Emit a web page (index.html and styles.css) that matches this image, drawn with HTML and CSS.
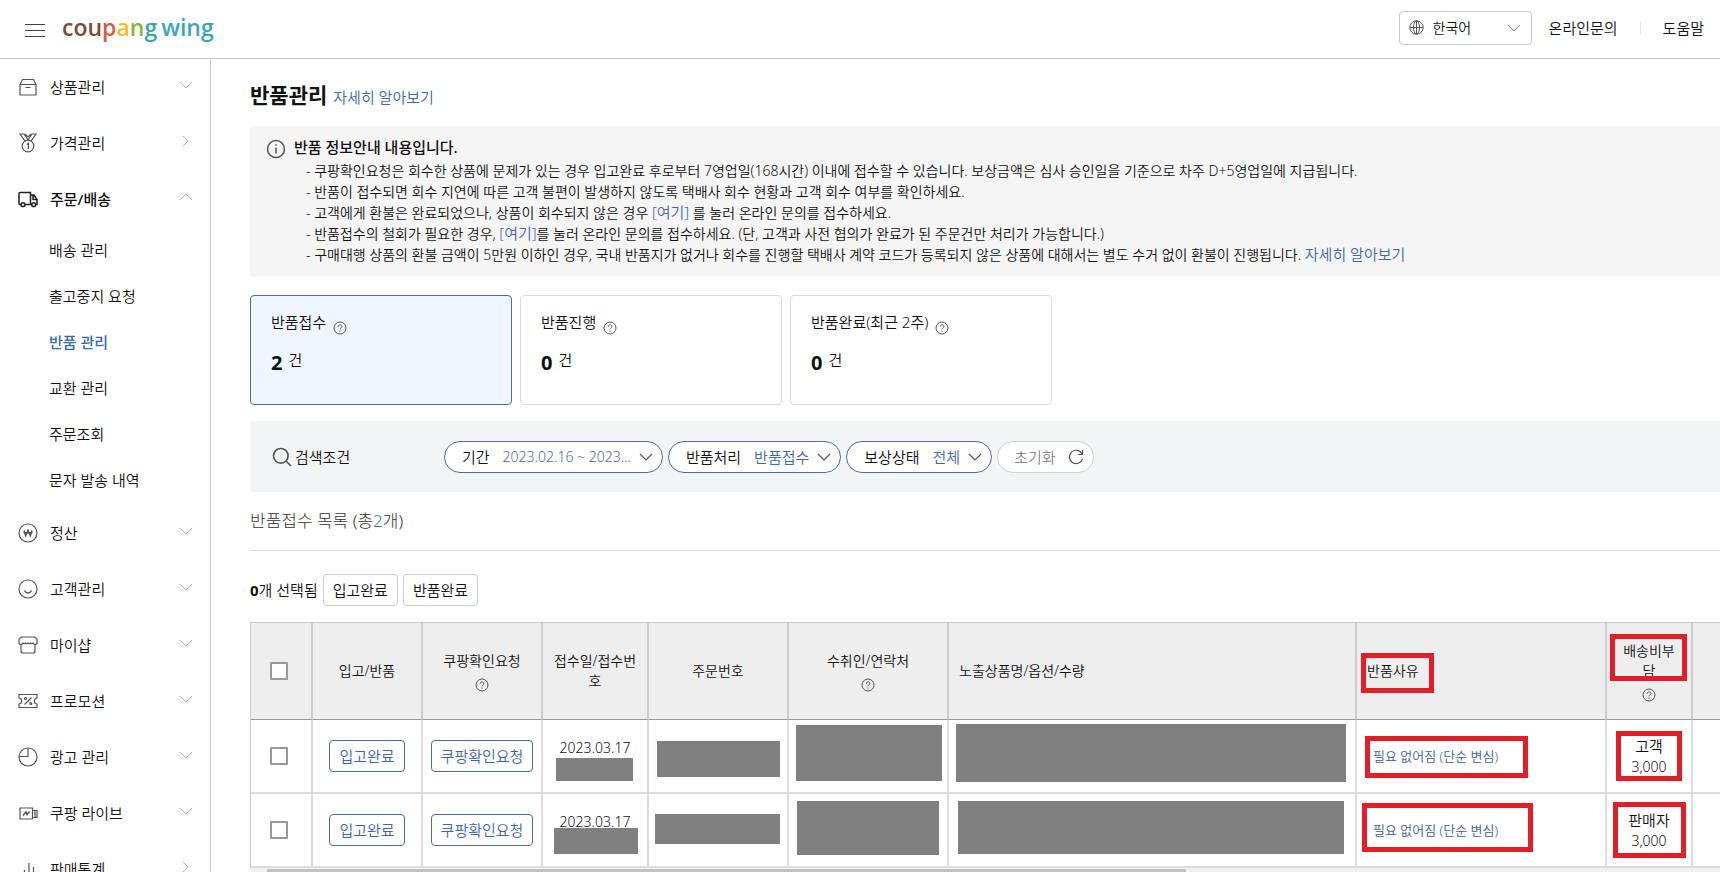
FILE: index.html
```html
<!DOCTYPE html>
<html lang="ko">
<head>
<meta charset="utf-8">
<title>반품관리 - coupang wing</title>
<link rel="stylesheet" href="styles.css">
</head>
<body>
<svg class="sprite" aria-hidden="true">
  <symbol id="down" viewBox="0 0 14 8"><path d="M1 1l6 6 6-6"/></symbol>
  <symbol id="up" viewBox="0 0 14 8"><path d="M1 7l6-6 6 6"/></symbol>
  <symbol id="right" viewBox="0 0 8 14"><path d="M1 2l5 5-5 5"/></symbol>
  <symbol id="help" viewBox="0 0 14 14"><circle cx="7" cy="7" r="6"/><path d="M5.200 5.800c0-2.600 3.700-2.500 3.700-.3 0 1.400-1.900 1.400-1.900 2.800M7 9.500v1.200"/></symbol>
</svg>

<header class="topbar">
  <button class="menu-toggle" type="button" aria-label="메뉴">
    <svg width="20" height="14" viewBox="0 0 20 14"><path d="M0 .5h20M0 6.500h20M0 12.500h20"/></svg>
  </button>
  <a class="logo" href="#"><span><span class="brown">cou</span><span class="red">p</span><span class="yellow">a</span><span class="green">n</span><span class="teal">g</span></span><span class="sky">wing</span></a>
  <div class="tools">
    <label class="lang">
      <svg width="15" height="15" viewBox="0 0 15 15"><circle cx="7.500" cy="7.500" r="6.700"/><ellipse cx="7.500" cy="7.500" rx="3" ry="6.700"/><path d="M7.500 1v13M1 7.500h13"/></svg>
      <select aria-label="언어"><option>한국어</option></select>
      <svg class="lang-arrow" width="14" height="8"><use href="#down"/></svg>
    </label>
    <a class="tool" href="#">온라인문의</a>
    <span class="divider"></span>
    <a class="tool" href="#">도움말</a>
  </div>
</header>

<div class="layout">
  <nav class="sidebar">
    <a class="item" href="#"><svg class="ico" viewBox="0 0 20 20"><path d="M2 7.500V18h16V7.500zM2 7.500L4.500 2.500h11L18 7.500M7.500 10.500h5"/></svg><span>상품관리</span><svg class="arrow"><use href="#down"/></svg></a>
    <a class="item" href="#"><svg class="ico" viewBox="0 0 20 20"><circle cx="10" cy="13" r="5.800"/><path d="M7 8L2 1h4l4 6 4-6h4l-5 7M7 1l3 3 3-3M8.800 11.500l1.600-1.200V16"/></svg><span>가격관리</span><svg class="arrow"><use href="#right"/></svg></a>
    <a class="item current" href="#"><svg class="ico" viewBox="0 0 20 20"><path d="M3 15.500H1.800Q1 15.500 1 14.500v-10Q1 3.500 2 3.500h10.500v12H7M12.500 6h3.500l3 4.500v5h-1.500M13.800 15.500h-1M15 6v4.500h4"/><circle cx="5" cy="15.700" r="1.900"/><circle cx="15.700" cy="15.700" r="1.900"/></svg><span>주문/배송</span><svg class="arrow"><use href="#up"/></svg></a>
    <div class="submenu">
      <a href="#">배송 관리</a>
      <a href="#">출고중지 요청</a>
      <a class="selected" href="#">반품 관리</a>
      <a href="#">교환 관리</a>
      <a href="#">주문조회</a>
      <a href="#">문자 발송 내역</a>
    </div>
    <a class="item" href="#"><svg class="ico" viewBox="0 0 20 20"><circle cx="10" cy="10" r="9"/><path class="heavy" d="M6 7.500l1.700 5L10 7.500l2.300 5L14 7.500M5.500 9.800h9"/></svg><span>정산</span><svg class="arrow"><use href="#down"/></svg></a>
    <a class="item" href="#"><svg class="ico" viewBox="0 0 20 20"><circle cx="10" cy="10" r="9"/><path d="M6.500 11.500c1 3.200 6 3.200 7 0"/></svg><span>고객관리</span><svg class="arrow"><use href="#down"/></svg></a>
    <a class="item" href="#"><svg class="ico" viewBox="0 0 20 20"><path d="M3.500 2h13L19 4v3.500q0 2-2 2-1.500 0-2-1.500-1 1.500-2.500 0-1 1.500-2.500 0-1 1.500-2.500 0-1 1.500-2.500 0-.5 1.500-2 1.500-2 0-2-2V4zM3 10v6q0 2 2 2h10q2 0 2-2v-6"/></svg><span>마이샵</span><svg class="arrow"><use href="#down"/></svg></a>
    <a class="item" href="#"><svg class="ico" viewBox="0 0 20 20"><path d="M1 3.500h18V7c-3.500.5-3.500 5.500 0 6v3.500H1V13c3.500-.5 3.500-5.500 0-6zM6.500 13.500l7-7"/><circle cx="7.500" cy="7.500" r="1"/><circle cx="12.800" cy="12.500" r="1"/></svg><span>프로모션</span><svg class="arrow"><use href="#down"/></svg></a>
    <a class="item" href="#"><svg class="ico" viewBox="0 0 20 20"><circle cx="10" cy="10" r="9"/><path d="M10 1v8.500H1.200"/></svg><span>광고 관리</span><svg class="arrow"><use href="#down"/></svg></a>
    <a class="item" href="#"><svg class="ico" viewBox="0 0 20 20"><path d="M2 5h12.500v11H2zM14.500 7.500H19v7h-4.500M17 7.500v7"/><path class="heavy" d="M5 12.500l3-3.500 1 2.500 2.500-3"/></svg><span>쿠팡 라이브</span><svg class="arrow"><use href="#down"/></svg></a>
    <a class="item" href="#"><svg class="ico" viewBox="0 0 20 20"><path d="M11 4v14M6.500 11v7M15.500 8v10"/></svg><span>판매통계</span><svg class="arrow"><use href="#right"/></svg></a>
  </nav>

  <main class="content">
    <div class="page-title"><h1>반품관리</h1><a href="#">자세히 알아보기</a></div>

    <section class="notice">
      <svg class="info" width="20" height="20" viewBox="0 0 20 20"><circle cx="10" cy="10" r="8.500"/><path d="M10 8.500v6M10 5.200v1.600"/></svg>
      <div>
        <h2>반품 정보안내 내용입니다.</h2>
        <ul>
          <li>- 쿠팡확인요청은 회수한 상품에 문제가 있는 경우 입고완료 후로부터 7영업일(168시간) 이내에 접수할 수 있습니다. 보상금액은 심사 승인일을 기준으로 차주 D+5영업일에 지급됩니다.</li>
          <li>- 반품이 접수되면 회수 지연에 따른 고객 불편이 발생하지 않도록 택배사 회수 현황과 고객 회수 여부를 확인하세요.</li>
          <li>- 고객에게 환불은 완료되었으나, 상품이 회수되지 않은 경우 <a href="#">[여기]</a> 를 눌러 온라인 문의를 접수하세요.</li>
          <li>- 반품접수의 철회가 필요한 경우, <a href="#">[여기]</a>를 눌러 온라인 문의를 접수하세요. (단, 고객과 사전 협의가 완료가 된 주문건만 처리가 가능합니다.)</li>
          <li>- 구매대행 상품의 환불 금액이 5만원 이하인 경우, 국내 반품지가 없거나 회수를 진행할 택배사 계약 코드가 등록되지 않은 상품에 대해서는 별도 수거 없이 환불이 진행됩니다. <a href="#">자세히 알아보기</a></li>
        </ul>
      </div>
    </section>

    <section class="cards">
      <button class="card active" type="button">
        <span class="card-label">반품접수 <svg class="help"><use href="#help"/></svg></span>
        <span class="card-count"><b>2</b><span>건</span></span>
      </button>
      <button class="card" type="button">
        <span class="card-label">반품진행 <svg class="help"><use href="#help"/></svg></span>
        <span class="card-count"><b>0</b><span>건</span></span>
      </button>
      <button class="card" type="button">
        <span class="card-label">반품완료(최근 2주) <svg class="help"><use href="#help"/></svg></span>
        <span class="card-count"><b>0</b><span>건</span></span>
      </button>
    </section>

    <section class="filters">
      <div class="filters-label"><svg width="20" height="20" viewBox="0 0 20 20"><circle cx="8.800" cy="8.800" r="7.300"/><path d="M14 14l5 5"/></svg>검색조건</div>
      <div class="pills">
        <button class="pill" type="button">기간<span class="value date">2023.02.16 ~ 2023...</span><svg class="pill-arrow"><use href="#down"/></svg></button>
        <button class="pill" type="button">반품처리<span class="value">반품접수</span><svg class="pill-arrow"><use href="#down"/></svg></button>
        <button class="pill" type="button">보상상태<span class="value">전체</span><svg class="pill-arrow"><use href="#down"/></svg></button>
        <button class="pill reset" type="button">초기화<svg width="16" height="16" viewBox="0 0 16 16"><path d="M14.200 5.200A6.700 6.700 0 1 0 14.500 10M14.600 1v4.500h-4.500"/></svg></button>
      </div>
    </section>

    <h2 class="list-title">반품접수 목록 (총<span>2</span>개)</h2>

    <div class="bulk">
      <span class="picked"><b>0</b>개 선택됨</span>
      <button class="btn" type="button">입고완료</button>
      <button class="btn" type="button">반품완료</button>
    </div>

    <div class="table-wrap">
      <table>
        <colgroup><col class="w-check"><col class="w-in"><col class="w-req"><col class="w-date"><col class="w-order"><col class="w-person"><col class="w-item"><col class="w-reason"><col class="w-fee"><col class="w-rest"></colgroup>
        <thead>
          <tr>
            <th class="pick"><input type="checkbox" aria-label="전체 선택"></th>
            <th>입고/반품</th>
            <th>쿠팡확인요청<svg class="help"><use href="#help"/></svg></th>
            <th>접수일/접수번호</th>
            <th>주문번호</th>
            <th>수취인/연락처<svg class="help"><use href="#help"/></svg></th>
            <th class="left">노출상품명/옵션/수량</th>
            <th class="left">반품사유<i class="mark mark-reason-head"></i></th>
            <th>배송비부<br>담<svg class="help"><use href="#help"/></svg><i class="mark mark-fee-head"></i></th>
            <th></th>
          </tr>
        </thead>
        <tbody>
          <tr>
            <td class="pick"><input type="checkbox" aria-label="첫 번째 반품 선택"></td>
            <td><button class="btn blue" type="button">입고완료</button></td>
            <td><button class="btn blue" type="button">쿠팡확인요청</button></td>
            <td class="date-cell">2023.03.17<i class="mask mask-date-1"></i></td>
            <td><i class="mask mask-order-1"></i></td>
            <td><i class="mask mask-person-1"></i></td>
            <td><i class="mask mask-item-1"></i></td>
            <td class="reason"><a href="#">필요 없어짐 (단순 변심)</a><i class="mark mark-reason-1"></i></td>
            <td class="fee"><span>고객</span><br>3,000<i class="mark mark-fee-1"></i></td>
            <td></td>
          </tr>
          <tr>
            <td class="pick"><input type="checkbox" aria-label="두 번째 반품 선택"></td>
            <td><button class="btn blue" type="button">입고완료</button></td>
            <td><button class="btn blue" type="button">쿠팡확인요청</button></td>
            <td class="date-cell">2023.03.17<i class="mask mask-date-2"></i></td>
            <td><i class="mask mask-order-2"></i></td>
            <td><i class="mask mask-person-2"></i></td>
            <td><i class="mask mask-item-2"></i></td>
            <td class="reason"><a href="#">필요 없어짐 (단순 변심)</a><i class="mark mark-reason-2"></i></td>
            <td class="fee"><span>판매자</span><br>3,000<i class="mark mark-fee-2"></i></td>
            <td></td>
          </tr>
        </tbody>
      </table>
      <div class="scrollbar"><div class="thumb"></div></div>
    </div>
  </main>
</div>
</body>
</html>
```
FILE: styles.css
```css
* { box-sizing: border-box; }

body {
  margin: 0;
  height: 100vh;
  overflow: hidden;
  display: flex;
  flex-direction: column;
  background: #fff;
  color: #111;
  font: 350 15px/20px "Noto Sans", "Noto Sans CJK KR", sans-serif;
}

a { color: inherit; text-decoration: none; }
button, select, input { font: inherit; color: inherit; }
button { cursor: pointer; }
b { font-weight: 700; }
h1, h2, ul { margin: 0; padding: 0; list-style: none; }
svg { fill: none; stroke: #555; stroke-width: 1.2; flex: none; }
.sprite { display: none; }

/* Top bar */
.topbar {
  flex: none;
  display: flex;
  align-items: center;
  height: 59px;
  padding: 0 16px 0 25px;
  border-bottom: 1px solid #c8c8c8;
}
.menu-toggle { display: flex; margin-top: 4px; padding: 0; border: 0; background: none; }
.menu-toggle svg { stroke: #444; stroke-width: 1; }
.logo {
  display: flex;
  gap: 4px;
  margin: 0 auto 4px 17px;
  font-family: "Open Sans", "Noto Sans", sans-serif;
  font-size: 23px;
  line-height: 32px;
  font-weight: 600;
}
.brown { color: #7b4b36; }
.red { color: #dd5a44; }
.yellow { color: #f3bd2c; }
.green { color: #84b840; }
.teal { color: #3ba6ae; }
.sky { color: #3ba5c6; }
.tools { display: flex; align-items: center; margin-bottom: 3px; }
.lang {
  display: flex;
  align-items: center;
  width: 133px;
  height: 34px;
  margin-right: 17px;
  padding: 0 10px 0 9px;
  border: 1px solid #c8c8c8;
  border-radius: 4px;
  font-size: 14px;
}
.lang select {
  flex: 1;
  appearance: none;
  margin-left: 9px;
  padding: 0;
  border: 0;
  background: none;
}
.lang svg { stroke-width: 1; }
.lang .lang-arrow { stroke: #888; }
.divider { width: 1px; height: 14px; margin: 0 22px; background: #e6e6e6; }

.layout { flex: 1; min-height: 0; display: flex; }

/* Side menu */
.sidebar {
  flex: none;
  width: 211px;
  overflow: hidden;
  border-right: 1px solid #c8c8c8;
}
.item { display: flex; align-items: center; height: 56px; padding: 0 17px 0 18px; }
.ico { width: 20px; height: 20px; margin-right: 12px; }
.item span { flex: 1; }
.arrow { width: 14px; height: 14px; margin-bottom: 4px; stroke: #b4b4b4; stroke-width: 1; }
.current { font-weight: 500; }
.current .ico { stroke: #222; stroke-width: 1.5; }
.heavy { stroke-width: 1.6; }
.submenu { padding-bottom: 2px; }
.submenu a { display: block; padding-left: 49px; line-height: 46px; }
.submenu .selected { color: #346aba; font-weight: 500; }

/* Content */
.content { flex: 1; min-width: 0; padding: 18px 0 0 39px; overflow: hidden; }
.page-title { display: flex; align-items: baseline; gap: 6px; height: 36px; margin-bottom: 13px; line-height: 36px; }
.page-title h1 { font-size: 21px; line-height: 36px; }
.page-title a, .notice a { color: #4265b8; font-size: 15px; }

.notice {
  display: flex;
  gap: 8px;
  padding: 10px 16px 12px;
  border-radius: 4px 0 0 4px;
  background: #f5f5f5;
}
.info { margin-top: 3px; stroke: #555; stroke-width: 1.5; }
.notice h2 { margin-bottom: 2px; font-size: 15px; line-height: 22px; font-weight: 500; }
.notice ul { padding-left: 12px; font-size: 14px; }
.notice li { height: 21px; line-height: 21px; white-space: nowrap; }

.cards { display: flex; gap: 8px; margin: 18px 0 16px; }
.card {
  display: flex;
  flex-direction: column;
  align-items: flex-start;
  gap: 15px;
  width: 262px;
  height: 110px;
  padding: 16px 20px;
  border: 1px solid #dcdcdc;
  border-radius: 4px;
  background: #fff;
}
.card.active { border-color: #4c6c9c; background: #f0f6ff; }
.card-label { display: flex; gap: 7px; line-height: 20px; }
.card-label .help { margin-top: 9px; }
.help { width: 14px; height: 14px; stroke-width: 1; }
.card-count { display: flex; gap: 6px; line-height: 20px; }
.card-count b { font-size: 20px; line-height: 26px; }

.filters {
  display: flex;
  align-items: center;
  height: 71px;
  padding-left: 22px;
  border-radius: 4px 0 0 4px;
  background: #f3f4f5;
}
.filters-label { display: flex; align-items: center; gap: 3px; width: 172px; }
.filters-label svg { stroke-width: 1.6; }
.pills { display: flex; gap: 5px; }
.pill {
  display: flex;
  align-items: center;
  height: 32px;
  padding: 0 9px 0 17px;
  border: 1px solid #4f6c9e;
  border-radius: 16px;
  background: #fff;
  white-space: nowrap;
}
.value { margin: 0 8px 0 13px; color: #3c69bd; }
.date { color: #5468a0; font-size: 14px; }
.pill-arrow { width: 14px; height: 8px; }
.reset { gap: 12px; padding: 0 9px 0 16px; border-color: #cfcfcf; color: #888; }

.list-title {
  padding: 18px 0;
  border-bottom: 1px solid #dcdcdc;
  color: #333;
  font-size: 17px;
  line-height: 22px;
  font-weight: 300;
}
.list-title span { color: #456aa0; }

.bulk { display: flex; align-items: center; gap: 5px; padding: 23px 0 16px; }
.btn {
  height: 32px;
  padding: 0 9px;
  border: 1px solid #ccc;
  border-radius: 4px;
  background: #fff;
  white-space: nowrap;
}
.btn.blue { border-color: #4a6e9e; color: #3c66bc; }

/* Returns table */
table {
  width: 1603px;
  table-layout: fixed;
  border-spacing: 0;
  border: solid #ccc;
  border-width: 1px 0 0 1px;
}
.w-check { width: 62px; }
.w-in { width: 110px; }
.w-req { width: 120px; }
.w-date { width: 106px; }
.w-order { width: 140px; }
.w-person { width: 160px; }
.w-item { width: 408px; }
.w-reason { width: 250px; }
.w-fee { width: 86px; }
.w-rest { width: 160px; }
th, td { position: relative; padding: 0 10px; text-align: center; vertical-align: middle; }
th {
  height: 97px;
  border-right: 2px solid #ccc;
  border-bottom: 1px solid #999;
  background: #eee;
  font-size: 14px;
  font-weight: 350;
  word-break: break-all;
}
td { height: 74px; padding: 0 4px; border-right: 2px solid #dcdcdc; border-bottom: 2px solid #dcdcdc; }
th .help { display: block; margin: 7px auto 0; }
.left { text-align: left; }
.pick { padding: 0 4px 0 0; }
input[type="checkbox"] {
  appearance: none;
  display: block;
  width: 18px;
  height: 18px;
  margin: 0 auto;
  border: 2px solid #999;
  border-radius: 1px;
  background: #fff;
}
.date-cell { padding-top: 18px; font-size: 14px; vertical-align: top; }
.reason { padding-left: 16px; text-align: left; font-size: 13px; }
.reason a { color: #3c5cab; }
.fee { font-size: 14px; }
.fee span { font-size: 15px; }

/* Redaction blocks and highlight frames lying over the cells */
.mask { position: absolute; background: #808080; }
.mask-date-1 { left: 13px; top: 38px; width: 77px; height: 23px; }
.mask-date-2 { left: 11px; top: 34px; width: 84px; height: 26px; }
.mask-order-1 { left: 8px; top: 21px; width: 123px; height: 36px; }
.mask-order-2 { left: 6px; top: 20px; width: 125px; height: 30px; }
.mask-person-1 { left: 7px; top: 5px; width: 146px; height: 56px; }
.mask-person-2 { left: 8px; top: 7px; width: 142px; height: 54px; }
.mask-item-1 { left: 7px; top: 4px; width: 390px; height: 58px; }
.mask-item-2 { left: 9px; top: 7px; width: 386px; height: 53px; }
.mark { position: absolute; border: 5px solid #e41e26; pointer-events: none; }
.mark-reason-head { left: 4px; top: 30px; width: 73px; height: 40px; }
.mark-fee-head { left: 3px; top: 11px; width: 77px; height: 47px; }
.mark-reason-1 { left: 8px; top: 16px; width: 163px; height: 42px; }
.mark-reason-2 { left: 5px; top: 9px; width: 171px; height: 49px; }
.mark-fee-1 { left: 9px; top: 11px; width: 66px; height: 50px; }
.mark-fee-2 { left: 6px; top: 8px; width: 73px; height: 56px; }

.scrollbar { height: 17px; padding: 1px 17px; background: #f1f1f1; }
.thumb { width: 64%; height: 15px; background: #c1c1c1; }
```
